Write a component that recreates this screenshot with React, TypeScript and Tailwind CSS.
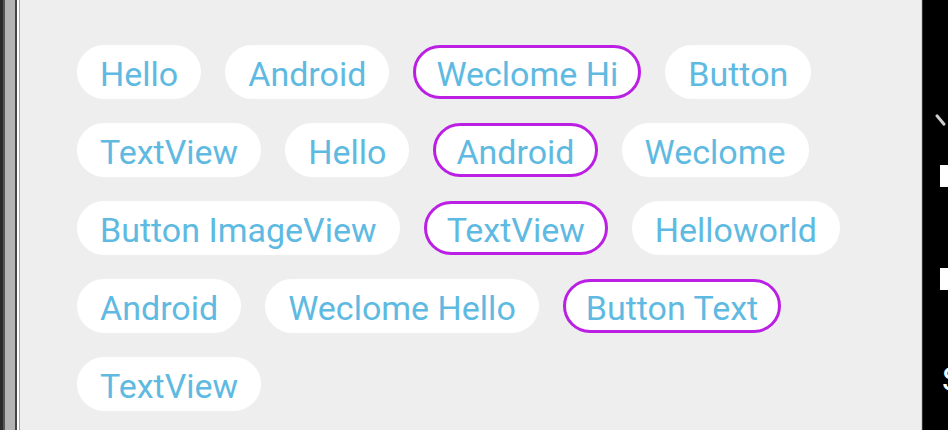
const tags = [
  { label: "Hello", selected: false },
  { label: "Android", selected: false },
  { label: "Weclome Hi", selected: true },
  { label: "Button", selected: false },
  { label: "TextView", selected: false },
  { label: "Hello", selected: false },
  { label: "Android", selected: true },
  { label: "Weclome", selected: false },
  { label: "Button ImageView", selected: false },
  { label: "TextView", selected: true },
  { label: "Helloworld", selected: false },
  { label: "Android", selected: false },
  { label: "Weclome Hello", selected: false },
  { label: "Button Text", selected: true },
  { label: "TextView", selected: false },
];

function Tag({ label, selected }: { label: string; selected: boolean }) {
  return (
    <div
      className={
        selected
          ? "flex h-[54px] items-center rounded-full border-[3px] border-[#bb1fe4] bg-white px-[20px] pt-[4px] text-[34px] leading-none text-[#5fbae2]"
          : "flex h-[54px] items-center rounded-full border-[3px] border-white bg-white px-[20px] pt-[4px] text-[34px] leading-none text-[#5fbae2]"
      }
    >
      {label}
    </div>
  );
}

export default function App() {
  return (
    <div
      className="flex h-[430px] w-[948px] overflow-hidden bg-[#eeeeee]"
      style={{ fontFamily: "Roboto, 'Noto Sans', sans-serif" }}
    >
      {/* device frame, left */}
      <div className="flex h-full shrink-0">
        <div className="w-[3px] bg-[#2b2b2b]" />
        <div className="w-[2px] bg-[#555555]" />
        <div className="w-[10px] bg-[#b4b4b4]" />
        <div className="w-[2px] bg-[#444444]" />
        <div className="w-[2px] bg-white" />
        <div className="w-[1px] bg-[#aaaaaa]" />
      </div>

      {/* tag cloud */}
      <div className="flex-1 pl-[57px] pr-4 pt-[45px]">
        <div className="flex flex-wrap gap-x-6 gap-y-6">
          {tags.map((t, i) => (
            <Tag key={i} label={t.label} selected={t.selected} />
          ))}
        </div>
      </div>

      {/* device frame, right */}
      <div className="w-[1px] shrink-0 bg-[#d4d4d4]" />
      <div className="w-[1px] shrink-0 bg-[#333333]" />
      <div className="w-[25px] shrink-0 overflow-hidden bg-black">
        <div className="flex flex-col pl-[14px] pt-[113px]">
          <div className="ml-[2px] h-[14px] w-[3px] -rotate-[40deg] rounded-sm bg-[#cccccc]" />
          <div className="ml-[3px] mt-[38px] h-[22px] w-[10px] bg-white" />
          <div className="ml-[3px] mt-[81px] h-[22px] w-[10px] bg-white" />
          <div className="ml-[5px] mt-[72px] w-[6px] overflow-hidden text-[34px] leading-none text-white">S</div>
        </div>
      </div>
    </div>
  );
}
